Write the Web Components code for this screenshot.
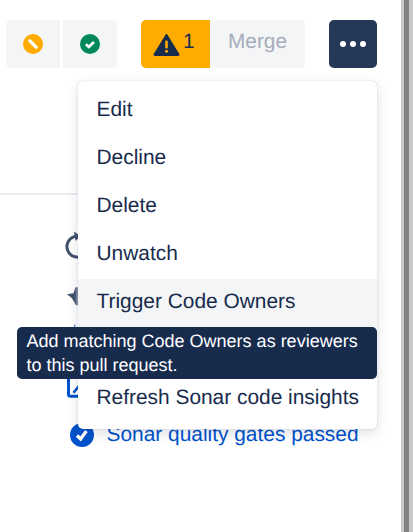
<!DOCTYPE html>
<html><head><meta charset="utf-8">
<style>
html,body{margin:0;padding:0;height:100%;background:#fff;overflow:hidden}
body{font-family:"Liberation Sans",Arial,sans-serif;color:#172b4d;text-rendering:geometricPrecision}
</style></head><body>
<pr-page></pr-page>
<script>
const ICONS={
 warn:'<svg width="27" height="23" viewBox="0 0 27 23" style="display:block"><path d="M13.500 1 L26 21.300 a.8 .8 0 0 1 -.7 1.200 H1.700 a.8 .8 0 0 1 -.7 -1.200 Z" fill="#172b4d" stroke="#172b4d" stroke-linejoin="round"/><rect x="12.200" y="7.500" width="2.600" height="8" rx="1.200" fill="#ffab00"/><circle cx="13.500" cy="18.300" r="1.500" fill="#ffab00"/></svg>',
 block:'<svg width="20" height="20" viewBox="0 0 20 20" style="display:block"><circle cx="10" cy="10" r="10" fill="#ffab00"/><rect x="4" y="8.400" width="12" height="3.200" rx="1" fill="#fff" transform="rotate(45 10 10)"/></svg>',
 ok:'<svg width="20" height="20" viewBox="0 0 20 20" style="display:block"><circle cx="10" cy="10" r="10" fill="#00875a"/><path d="M5.800 10.300l3 2.600 5.200-5" fill="none" stroke="#fff" stroke-width="2.800"/></svg>',
 okblue:'<svg width="24" height="24" viewBox="0 0 24 24" style="display:block;margin-left:4px"><circle cx="12" cy="12" r="12" fill="#0052cc"/><path d="M7 12.500l3.600 3.400 5.800-7.800" fill="none" stroke="#fff" stroke-width="3.400"/></svg>',
 refresh:'<svg width="28" height="24" viewBox="66 232 28 24" style="display:block;overflow:visible"><path d="M76 236.200A10.500 10.500 0 1 0 84 254.800" fill="none" stroke="#42526e" stroke-width="3"/><path d="M74 231.500l6.500 4.500-5 5z" fill="#42526e"/></svg>',
 pin:'<svg width="28" height="24" viewBox="66 279.750 28 24" style="display:block;overflow:visible"><defs><linearGradient id="pg" x1="0" x2="1" y1="0" y2="0"><stop offset="0" stop-color="#42526e"/><stop offset=".7" stop-color="#42526e"/><stop offset="1" stop-color="#9aa3b5"/></linearGradient></defs><path d="M67 294L73.500 293L75.500 287H78V305H76L72 298Z" fill="url(#pg)"/></svg>',
 link:'<svg width="28" height="24" viewBox="66 327.500 28 24" style="display:block;overflow:visible"><path d="M74.700 325V335" stroke="#0052cc" stroke-width="1.200" opacity=".7"/></svg>',
 edit:'<svg width="28" height="24" viewBox="66 375.250 28 24" style="display:block;overflow:visible"><rect x="68.500" y="372" width="20" height="24.500" rx="2" fill="none" stroke="#0052cc" stroke-width="3"/><path d="M73.500 393L80 385" stroke="#0052cc" stroke-width="2.600" fill="none"/></svg>'
};
function def(name,html){customElements.define(name,class extends HTMLElement{constructor(){super();this.attachShadow({mode:'open'}).innerHTML=html;}});}
def('status-chip',`<style>:host{display:flex;align-items:center;justify-content:center;width:54px;height:48px;background:#f4f5f7}
:host([first]){border-radius:5px 0 0 5px}:host([last]){border-radius:0 5px 5px 0}</style><slot></slot>`);
def('merge-group',`<style>:host{display:flex;height:48px;border-radius:5px;overflow:hidden;font-size:20.8px}
.w{display:flex;align-items:center;gap:3px;width:69px;box-sizing:border-box;padding-left:12px;background:#ffab00;color:#172b4d}
.w span{padding-bottom:5px}
.m{display:flex;align-items:center;justify-content:center;width:95px;box-sizing:border-box;padding-bottom:5px;background:#f4f5f7;color:#a5adba}</style>
<div class="w"><slot name="icon"></slot><span>1</span></div><div class="m">Merge</div>`);
def('more-button',`<style>:host{display:flex;align-items:center;justify-content:center;gap:3.500px;width:48px;height:48px;border-radius:5px;background:#253858}
i{display:block;width:6.500px;height:6.500px;border-radius:50%;background:#fff}</style><i></i><i></i><i></i>`);
def('menu-item',`<style>:host{display:flex;align-items:center;height:48px;box-sizing:border-box;padding:0 0 2px 18.500px;font-size:20.900px;color:#172b4d}
:host([active]){background:#f4f5f7}</style><slot></slot>`);
def('action-menu',`<style>:host{position:absolute;left:78px;top:81px;width:299px;height:348px;box-sizing:border-box;padding:6px 0;background:#fff;border-radius:5px;box-shadow:0 0 1px rgba(9,30,66,.3),0 4px 12px rgba(9,30,66,.14)}</style><slot></slot>`);
def('hint-tip',`<style>:host{position:absolute;left:17px;top:327px;width:360px;height:52px;box-sizing:border-box;padding:1.500px 9.500px;background:#172b4d;color:#fff;border-radius:5px;font-size:18px;line-height:24px}</style><slot></slot>`);
def('side-row',`<style>:host{display:flex;align-items:center;height:47.750px;gap:12.500px;color:#0052cc;font-size:20.900px;white-space:nowrap}</style><slot></slot>`);
def('top-bar',`<style>:host{display:flex;gap:24px;height:48px;margin:20px 0 0 6px}.st{display:flex;gap:3px}</style>
<div class="st"><slot name="chips"></slot></div><slot></slot>`);
def('side-list',`<style>:host{display:block;padding-left:66px;margin-top:25px}</style><slot></slot>`);
def('pr-page',`<style>:host{display:block;position:relative;width:413px;height:532px;overflow:hidden;background:#fff}
.main{display:flow-root;width:401px}
.div{margin-top:124.500px;width:100px;height:2.600px;background:#ebecf0}
.sb{position:absolute;right:0;top:0;width:12px;height:532px;background:linear-gradient(90deg,#c8c8c8 0,#c8c8c8 3px,#808383 3px,#808383 8.500px,#c8c8c8 8.500px)}
</style>
<div class="main">
<top-bar><status-chip slot="chips" first>${ICONS.block}</status-chip><status-chip slot="chips" last>${ICONS.ok}</status-chip>
<merge-group><span slot="icon" style="display:flex">${ICONS.warn}</span></merge-group>
<more-button></more-button></top-bar>
<div class="div"></div>
<side-list>
<side-row>${ICONS.refresh}</side-row>
<side-row>${ICONS.pin}</side-row>
<side-row>${ICONS.link}</side-row>
<side-row>${ICONS.edit}</side-row>
<side-row>${ICONS.okblue}<span>Sonar quality gates passed</span></side-row>
</side-list>
</div>
<action-menu><menu-item>Edit</menu-item><menu-item>Decline</menu-item><menu-item>Delete</menu-item><menu-item>Unwatch</menu-item><menu-item active>Trigger Code Owners</menu-item><menu-item></menu-item><menu-item>Refresh Sonar code insights</menu-item></action-menu>
<hint-tip>Add matching Code Owners as reviewers to this pull request.</hint-tip>
<div class="sb"></div>`);
</script></body></html>
